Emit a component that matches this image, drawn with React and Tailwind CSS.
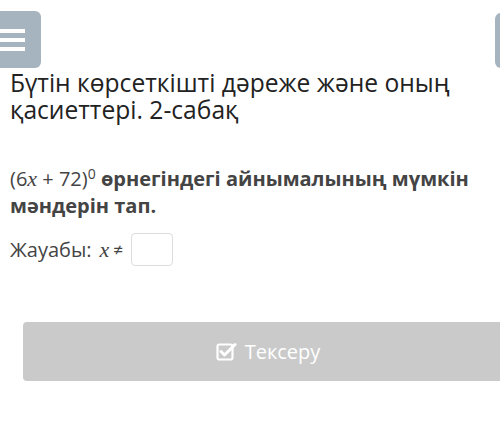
import { useState } from "react";

function CheckIcon() {
  return (
    <svg width="21" height="19" viewBox="0 0 21 19" fill="none">
      <rect x="1.5" y="2.5" width="15" height="15" rx="2" stroke="white" strokeWidth="2.2" />
      <path d="M5 9.5l3.5 3.5L19 2.5" stroke="white" strokeWidth="3" strokeLinecap="round" strokeLinejoin="round" />
    </svg>
  );
}

function App() {
  const [answer, setAnswer] = useState("");
  const mathFont = { fontFamily: '"Liberation Serif", serif' };

  return (
    <div className="w-[500px] h-[432px] overflow-hidden bg-white text-[#222]" style={{ fontFamily: '"Open Sans", sans-serif' }}>
      <div className="flex justify-between pt-[11px]">
        <button className="-ml-[15px] w-[56px] h-[57px] rounded-[6px] bg-[#a5b4bf] flex flex-col justify-center items-end gap-[5px] pr-[16px]">
          <span className="block w-[26px] h-[4px] bg-white" />
          <span className="block w-[26px] h-[4px] bg-white" />
          <span className="block w-[26px] h-[4px] bg-white" />
        </button>
        <button className="-mr-[51px] w-[56px] h-[55px] mt-[2px] rounded-[6px] bg-[#a5b4bf]" />
      </div>

      <div className="px-[10px]">
        <h1 className="mt-[1px] text-[24.6px] leading-[27px] text-[#222]">
          Бүтін көрсеткішті дәреже және оның қасиеттері. 2-сабақ
        </h1>

        <p className="mt-[42px] text-[20px] leading-[27px] text-[#444]">
          <span className="font-normal">
            (6<i style={mathFont} className="text-[22px]">x</i> + 72)
            <span className="text-[14px] align-[7px] leading-none">0</span>
          </span>{" "}
          <b className="font-bold">өрнегіндегі айнымалының мүмкін мәндерін тап.</b>
        </p>

        <div className="mt-[14px] flex items-center text-[20px] text-[#444]">
          <span>Жауабы:</span>
          <i className="ml-[8px] text-[22px]" style={mathFont}>x</i>
          <span className="ml-[4px] text-[17px]">≠</span>
          <input
            value={answer}
            onChange={(e) => setAnswer(e.target.value)}
            className="ml-[8px] w-[42px] h-[33px] border border-[#ddd] rounded-[4px] outline-none px-1"
          />
        </div>
      </div>

      <div className="mt-[56px] pl-[23px]">
        <button className="w-[490px] h-[59px] rounded-[4px] bg-[#cacaca] flex items-center justify-center gap-[8px] text-white text-[20px]">
          <CheckIcon />
          <span>Тексеру</span>
        </button>
      </div>
    </div>
  );
}

export default App;
